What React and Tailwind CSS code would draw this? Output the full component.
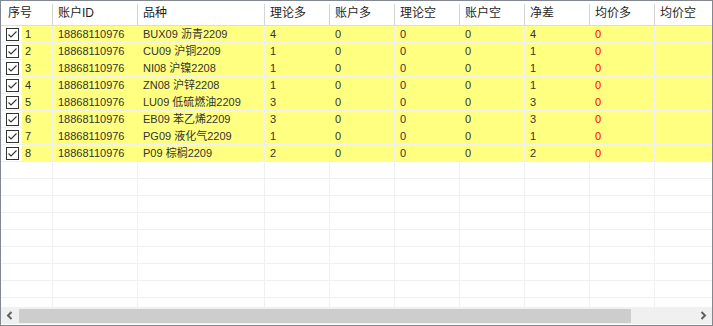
const COLS = [
  { key: "seq", label: "序号", w: "w-[52px]" },
  { key: "acct", label: "账户ID", w: "w-[85px]" },
  { key: "name", label: "品种", w: "w-[127px]" },
  { key: "tl", label: "理论多", w: "w-[65px]" },
  { key: "al", label: "账户多", w: "w-[65px]" },
  { key: "ts", label: "理论空", w: "w-[65px]" },
  { key: "as", label: "账户空", w: "w-[65px]" },
  { key: "net", label: "净差", w: "w-[65px]" },
  { key: "avgl", label: "均价多", w: "w-[65px]" },
  { key: "avgs", label: "均价空", w: "w-[65px]" },
];

const ROWS = [
  ["1", "BUX09 沥青2209", "4", "4"],
  ["2", "CU09 沪铜2209", "1", "1"],
  ["3", "NI08 沪镍2208", "1", "1"],
  ["4", "ZN08 沪锌2208", "1", "1"],
  ["5", "LU09 低硫燃油2209", "3", "3"],
  ["6", "EB09 苯乙烯2209", "3", "3"],
  ["7", "PG09 液化气2209", "1", "1"],
  ["8", "P09 棕榈2209", "2", "2"],
];

const FONT = "[font-family:'Liberation_Sans','Noto_Sans_CJK_SC',sans-serif]";

function CheckBox() {
  return (
    <svg width="13" height="13" viewBox="0 0 13 13" className="block">
      <rect x="0.5" y="0.5" width="12" height="12" fill="#fff" stroke="#333" />
      <path d="M2.5 6.5 L5 9 L10.5 3.5" fill="none" stroke="#333" strokeWidth="1.1" />
    </svg>
  );
}

function HeaderRow() {
  return (
    <div className="flex h-[25px] shrink-0 border-b border-[#dcdcdc] bg-white text-[12px] text-[#1e1e1e]">
      {COLS.map((c, i) => (
        <div key={c.key} className={`relative flex shrink-0 items-center ${c.w} ${i === 0 ? "pl-[7px]" : "pl-[5px]"}`}>
          <span className="whitespace-nowrap">{c.label}</span>
          <div className="absolute right-0 top-[3px] bottom-0 w-px bg-[#d5d5d5]" />
        </div>
      ))}
    </div>
  );
}

function DataRow({ row }) {
  const [seq, name, theo, net] = row;
  const cell = "flex shrink-0 items-center border-r border-[#f0f0f0] bg-[#ffff80] pl-[5px] whitespace-nowrap";
  return (
    <div className="flex h-[17px] shrink-0 border-b border-[#f0f0f0] text-[11px] text-[#333]">
      <div className="flex w-[52px] shrink-0 border-r border-[#f0f0f0]">
        <div className="flex w-[21px] shrink-0 items-center justify-end bg-white pr-[3px]">
          <CheckBox />
        </div>
        <div className="flex flex-1 items-center bg-[#ffff80] pl-[3px]">{seq}</div>
      </div>
      <div className={`${cell} w-[85px]`}>18868110976</div>
      <div className={`${cell} w-[127px]`}>{name}</div>
      <div className={`${cell} w-[65px]`}>{theo}</div>
      <div className={`${cell} w-[65px]`}>0</div>
      <div className={`${cell} w-[65px]`}>0</div>
      <div className={`${cell} w-[65px]`}>0</div>
      <div className={`${cell} w-[65px]`}>{net}</div>
      <div className={`${cell} w-[65px] text-[#ff0000]`}>0</div>
      <div className={`${cell} w-[65px]`}></div>
    </div>
  );
}

function EmptyRow() {
  return (
    <div className="flex h-[17px] shrink-0 border-b border-[#f0f0f0]">
      {COLS.map((c) => (
        <div key={c.key} className={`shrink-0 border-r border-[#f0f0f0] ${c.w}`} />
      ))}
    </div>
  );
}

function ScrollBar() {
  return (
    <div className="flex h-[17px] shrink-0 items-stretch bg-[#f0f0f0]">
      <div className="flex w-[18px] shrink-0 items-center justify-center">
        <svg width="8" height="9" viewBox="0 0 8 9">
          <path d="M5.5 1 L2 4.5 L5.5 8" fill="none" stroke="#606060" strokeWidth="2" />
        </svg>
      </div>
      <div className="flex flex-1 items-center">
        <div className="h-[14px] w-[612px] bg-[#cdcdcd]" />
      </div>
      <div className="flex w-[18px] shrink-0 items-center justify-center">
        <svg width="8" height="9" viewBox="0 0 8 9">
          <path d="M2.5 1 L6 4.5 L2.5 8" fill="none" stroke="#606060" strokeWidth="2" />
        </svg>
      </div>
    </div>
  );
}

export default function App() {
  return (
    <div className={`h-[326px] w-[713px] bg-white ${FONT}`}>
      <div className="flex h-full w-full flex-col overflow-hidden border border-[#828790] bg-white pb-px">
        <div className="flex min-h-0 flex-1 flex-col overflow-hidden">
          <HeaderRow />
          {ROWS.map((r) => (
            <DataRow key={r[0]} row={r} />
          ))}
          {Array.from({ length: 9 }).map((_, i) => (
            <EmptyRow key={i} />
          ))}
        </div>
        <ScrollBar />
      </div>
    </div>
  );
}
